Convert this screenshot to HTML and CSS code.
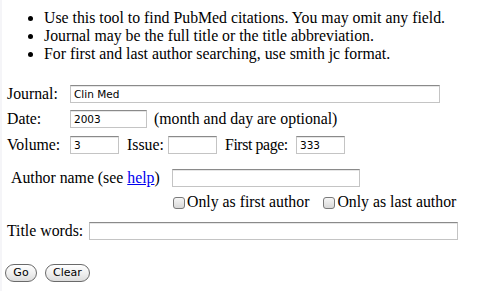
FILE: index.html
```html
<!DOCTYPE html>
<html>
<head>
<meta charset="utf-8">
<link rel="stylesheet" href="styles.css">
</head>
<body>
<div class="page">
  <ul class="tips">
    <li>Use this tool to find PubMed citations. You may omit any field.</li>
    <li>Journal may be the full title or the title abbreviation.</li>
    <li>For first and last author searching, use smith jc format.</li>
  </ul>
  <form class="form">
    <div class="row row-journal">
      <span class="lbl lbl-fixed">Journal:</span>
      <input class="field f-journal" type="text" value="Clin Med">
    </div>
    <div class="row row-date">
      <span class="lbl lbl-fixed">Date:</span>
      <input class="field f-date" type="text" value="2003">
      <span class="note">(month and day are optional)</span>
    </div>
    <div class="row row-vol">
      <span class="lbl lbl-vol">Volume:</span>
      <input class="field f-small" type="text" value="3">
      <span class="lbl lbl-issue">Issue:</span>
      <input class="field f-small" type="text" value="">
      <span class="lbl lbl-page">First page:</span>
      <input class="field f-small" type="text" value="333">
    </div>
    <div class="row row-author">
      <span class="lbl lbl-author">Author name (see <a href="#" class="link">help</a>)</span>
      <input class="field f-author" type="text" value="">
    </div>
    <div class="row row-checks">
      <label class="check"><span class="box"></span>Only as first author</label>
      <label class="check check-last"><span class="box"></span>Only as last author</label>
    </div>
    <div class="row row-title">
      <span class="lbl lbl-title">Title words:</span>
      <input class="field f-title" type="text" value="">
    </div>
    <div class="row row-buttons">
      <button type="button" class="btn btn-go">Go</button>
      <button type="button" class="btn btn-clear">Clear</button>
    </div>
  </form>
</div>
</body>
</html>
```
FILE: styles.css
```css
html, body {
  margin: 0;
  padding: 0;
  background: #ffffff;
}
body {
  border-left: 2px solid #f5f5f8;
  min-height: 291px;
  box-sizing: border-box;
  font-family: "Liberation Serif", "Times New Roman", serif;
  font-size: 15.8px;
  color: #000;
}
.page {
  padding: 9px 0 0 5px;
}
.tips {
  margin: 0;
  padding-left: 37px;
  line-height: 18px;
}
.tips li {
  height: 18px;
}
.form {
  margin: 0;
}
.row {
  display: flex;
  align-items: center;
  height: 18px;
  line-height: 18px;
  white-space: nowrap;
}
.row > * { flex-shrink: 0; }
.row-journal { margin-top: 22px; }
.row-date { margin-top: 7px; }
.row-vol { margin-top: 8px; }
.row-author { margin-top: 15px; }
.row-checks { margin-top: 6px; padding-left: 166px; }
.row-title { margin-top: 11px; }
.row-buttons { margin-top: 24px; margin-left: -2px; }

.lbl-fixed { width: 63px; }
.lbl-vol { width: 63px; }
.lbl-issue { margin-left: 8px; width: 41px; }
.lbl-page { margin-left: 8px; width: 71px; letter-spacing: -0.4px; }
.lbl-author { margin-left: 4px; width: 161px; }
.lbl-title { width: 82px; }
.note { margin-left: 7px; }

.link { color: #0000ee; text-decoration: underline; }

.field {
  box-sizing: border-box;
  height: 18px;
  margin: 0;
  padding: 0 3px;
  border: 1px solid #c4c4c4;
  border-top-color: #8a8a8a;
  box-shadow: inset 0 1px 0 #e6e6e6;
  font-family: "DejaVu Sans", "Noto Sans", sans-serif;
  font-size: 10.5px;
  color: #000;
  background: #fff;
  outline: none;
}
.f-journal { width: 370px; }
.f-date { width: 77px; }
.f-small { width: 49px; }
.f-author { width: 188px; }
.f-title { width: 369px; }

.check {
  display: flex;
  align-items: center;
}
.check-last { margin-left: 14px; }
.box {
  display: inline-block;
  width: 12px;
  height: 12px;
  box-sizing: border-box;
  border: 1px solid #7a7a7a;
  border-radius: 3px;
  background: linear-gradient(#f6f6f6, #d8d8d8);
  margin-right: 2px;
  margin-top: 2px;
}

.btn {
  box-sizing: border-box;
  height: 18px;
  margin: 0 8px 0 0;
  padding: 0;
  border: 1px solid #6a6a6a;
  border-radius: 9px;
  background: linear-gradient(#ffffff 0%, #f0f0f0 50%, #dcdcdc 100%);
  font-family: "DejaVu Sans", "Noto Sans", sans-serif;
  font-size: 11px;
  color: #000;
  line-height: 16px;
}
.btn-go { width: 32px; }
.btn-clear { width: 45px; }
```
